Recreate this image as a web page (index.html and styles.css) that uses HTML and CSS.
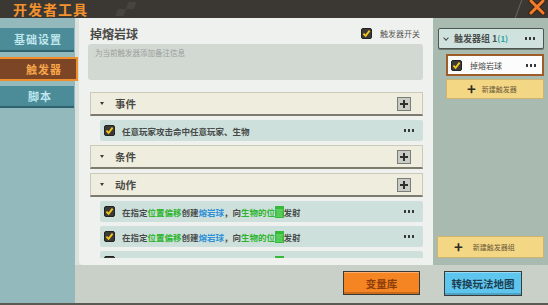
FILE: index.html
```html
<!DOCTYPE html>
<html lang="zh">
<head>
    <meta charset="UTF-8">
    <title>开发者工具</title>
    <link rel="stylesheet" href="styles.css">
</head>
<body>
<div class="app">
    <div class="topbar">
        <span class="title">开发者工具</span>
        <span class="tiles"></span>
        <span class="slash"></span>
        <svg class="close" width="18" height="15" viewBox="0 0 18 15">
            <path d="M3 1 L15 13 M15 1 L3 13" stroke="#3a2410" stroke-width="5" stroke-linecap="round"/>
            <path d="M3 1 L15 13 M15 1 L3 13" stroke="#f57a2a" stroke-width="3" stroke-linecap="round"/>
        </svg>
    </div>
    <div class="main">
        <div class="sidebar">
            <div class="tab">基础设置</div>
            <div class="tab active">触发器</div>
            <div class="tab">脚本</div>
        </div>
        <div class="work">
            <div class="upper">
                <div class="editor">
                    <div class="panel">
                        <div class="head">
                            <span class="name">掉熔岩球</span>
                            <span class="switch">
                                <svg class="check" width="11" height="11" viewBox="0 0 11 11"><rect x="0.5" y="0.5" width="10" height="10" rx="1.5" fill="#3c3a36" stroke="#222"/><path d="M2.4 5.6 L4.6 7.8 L8.6 2.6" fill="none" stroke="#f4c81c" stroke-width="1.8"/></svg>
                                触发器开关
                            </span>
                        </div>
                        <div class="note">为当前触发器添加备注信息</div>
                        <div class="list">
                            <div class="section"><i class="tri"></i><span>事件</span><b class="plus"></b></div>
                            <div class="item">
                                <svg class="check" width="11" height="11" viewBox="0 0 11 11"><rect x="0.5" y="0.5" width="10" height="10" rx="1.5" fill="#3c3a36" stroke="#222"/><path d="M2.4 5.6 L4.6 7.8 L8.6 2.6" fill="none" stroke="#f4c81c" stroke-width="1.8"/></svg>
                                <span class="txt">任意玩家攻击命中任意玩家、生物</span>
                                <span class="more"></span>
                            </div>
                            <div class="section"><i class="tri"></i><span>条件</span><b class="plus"></b></div>
                            <div class="section"><i class="tri"></i><span>动作</span><b class="plus"></b></div>
                            <div class="item">
                                <svg class="check" width="11" height="11" viewBox="0 0 11 11"><rect x="0.5" y="0.5" width="10" height="10" rx="1.5" fill="#3c3a36" stroke="#222"/><path d="M2.4 5.6 L4.6 7.8 L8.6 2.6" fill="none" stroke="#f4c81c" stroke-width="1.8"/></svg>
                                <span class="txt">在指定<em class="g">位置偏移</em>创建<em class="b">熔岩球</em>，向<em class="g">生物的位</em><em class="gbox">置</em>发射</span>
                                <span class="more"></span>
                            </div>
                            <div class="item">
                                <svg class="check" width="11" height="11" viewBox="0 0 11 11"><rect x="0.5" y="0.5" width="10" height="10" rx="1.5" fill="#3c3a36" stroke="#222"/><path d="M2.4 5.6 L4.6 7.8 L8.6 2.6" fill="none" stroke="#f4c81c" stroke-width="1.8"/></svg>
                                <span class="txt">在指定<em class="g">位置偏移</em>创建<em class="b">熔岩球</em>，向<em class="g">生物的位</em><em class="gbox">置</em>发射</span>
                                <span class="more"></span>
                            </div>
                            <div class="item">
                                <svg class="check" width="11" height="11" viewBox="0 0 11 11"><rect x="0.5" y="0.5" width="10" height="10" rx="1.5" fill="#3c3a36" stroke="#222"/><path d="M2.4 5.6 L4.6 7.8 L8.6 2.6" fill="none" stroke="#f4c81c" stroke-width="1.8"/></svg>
                                <span class="txt">在指定<em class="g">位置偏移</em>创建<em class="b">熔岩球</em>，向<em class="g">生物的位</em><em class="gbox">置</em>发射</span>
                                <span class="more"></span>
                            </div>
                        </div>
                    </div>
                </div>
                <div class="groups">
                    <div class="group">
                        <span class="chev"></span>
                        <span class="gname">触发器组 1<em>(1)</em></span>
                        <span class="more"></span>
                    </div>
                    <div class="trigger">
                        <svg class="check" width="11" height="11" viewBox="0 0 11 11"><rect x="0.5" y="0.5" width="10" height="10" rx="1.5" fill="#3c3a36" stroke="#222"/><path d="M2.4 5.6 L4.6 7.8 L8.6 2.6" fill="none" stroke="#f4c81c" stroke-width="1.8"/></svg>
                        <span class="tname">掉熔岩球</span>
                        <span class="more"></span>
                    </div>
                    <div class="add small"><span class="cross">+</span>新建触发器</div>
                    <div class="spacer"></div>
                    <div class="add wide"><span class="cross">+</span>新建触发器组</div>
                </div>
            </div>
            <div class="bottom">
                <div class="btn orange">变量库</div>
                <div class="btn blue">转换玩法地图</div>
            </div>
        </div>
    </div>
</div>
</body>
</html>
```

FILE: styles.css
```css
* {
    box-sizing: border-box;
}
body {
    margin: 0;
    font-family: "Noto Sans CJK SC", "Noto Sans", sans-serif;
    background: #3a3733;
}
.app {
    width: 548px;
    height: 305px;
    overflow: hidden;
    display: flex;
    flex-direction: column;
    border-bottom: 2px solid #5b5a52;
}
.topbar {
    height: 18px;
    flex: none;
    display: flex;
    align-items: center;
    background: #3b3834;
}
.title {
    margin-left: 13px;
    font-size: 14px;
    font-weight: bold;
    color: #f3922c;
    line-height: 18px;
    letter-spacing: 1px;
}
.tiles {
    margin-left: 30px;
    width: 16px;
    height: 14px;
    background:
        linear-gradient(#47443f, #47443f) 8px 0 / 8px 7px no-repeat,
        linear-gradient(#47443f, #47443f) 0 7px / 8px 7px no-repeat;
    transform: skewX(-20deg);
}
.slash {
    margin-left: auto;
    width: 1px;
    height: 18px;
    background: #6a6660;
    transform: skewX(-20deg);
    margin-right: 9px;
}
.close {
    margin-right: 2px;
    margin-top: -3px;
}
.main {
    flex: 1;
    display: flex;
    min-height: 0;
}
.sidebar {
    width: 75px;
    flex: none;
    background: #93b9bc;
    padding-top: 10px;
    display: flex;
    flex-direction: column;
    gap: 5px;
}
.tab {
    width: 74px;
    height: 24px;
    background: #4c8c98;
    border-bottom: 2px solid #2d6470;
    color: #bfe7ee;
    font-size: 11px;
    font-weight: bold;
    text-align: right;
    padding-right: 12px;
    line-height: 22px;
    letter-spacing: 1px;
}
.tab.active {
    width: 78px;
    background: #7b4526;
    border: 2px solid #f0902c;
    border-left: none;
    color: #f7a64a;
    padding-right: 14px;
    line-height: 20px;
    position: relative;
    z-index: 1;
}
.tab:last-child {
    height: 22px;
    padding-right: 22px;
    line-height: 20px;
}
.work {
    flex: 1;
    display: flex;
    flex-direction: column;
    background: #c9d0c8;
}
.upper {
    height: 247px;
    display: flex;
}
.editor {
    flex: 1;
    background: #dbe1dd;
    padding-left: 4px;
    display: flex;
}
.panel {
    flex: 1;
    background: #eff1ef;
    border-bottom-left-radius: 4px;
    padding: 5px 10px 6px 9px;
    display: flex;
    flex-direction: column;
}
.head {
    display: flex;
    align-items: center;
    height: 20px;
    padding-left: 2px;
}
.name {
    font-size: 12px;
    font-weight: bold;
    color: #4a4a48;
}
.switch {
    margin-left: auto;
    margin-right: 3px;
    display: flex;
    align-items: center;
    gap: 8px;
    font-size: 8px;
    color: #55554f;
}
.note {
    margin-top: 1px;
    height: 36px;
    background: #d2d8d2;
    border-radius: 3px;
    font-size: 7.5px;
    color: #9aa09a;
    padding: 3px 7px;
}
.list {
    margin-top: 12px;
    padding-left: 2px;
    height: 166px;
    overflow: hidden;
    display: flex;
    flex-direction: column;
    gap: 4px;
}
.section {
    flex: none;
    height: 24px;
    background: #eeedde;
    border: 1px solid #cbc9b8;
    border-bottom: 2px solid #7d7b70;
    display: flex;
    align-items: center;
    padding-left: 9px;
    font-size: 10.5px;
    font-weight: bold;
    color: #4a4a46;
}
.tri {
    width: 0;
    height: 0;
    border-left: 2.5px solid transparent;
    border-right: 2.5px solid transparent;
    border-top: 3px solid #3c3c3a;
    margin-right: 11px;
}
.plus {
    margin-left: auto;
    margin-right: 11px;
    width: 14px;
    height: 14px;
    background: #c9ccc6;
    border: 1px solid #7a7c78;
    position: relative;
}
.plus::before,
.plus::after {
    content: "";
    position: absolute;
    background: #2e302e;
}
.plus::before {
    left: 2px;
    top: 5px;
    width: 8px;
    height: 2px;
}
.plus::after {
    left: 5px;
    top: 2px;
    width: 2px;
    height: 8px;
}
.item {
    flex: none;
    margin-left: 10px;
    height: 21px;
    background: #cde0dc;
    border-radius: 2px;
    display: flex;
    align-items: center;
    padding-left: 4px;
    font-size: 8.5px;
    font-weight: bold;
    color: #474a48;
}
.item .check {
    margin-right: 7px;
}
.txt em {
    font-style: normal;
}
.g {
    color: #2fb52c;
}
.b {
    color: #2f8fd8;
}
.gbox {
    background: #38b83a;
    color: #60d060;
}
.more {
    margin-left: auto;
    margin-right: 8px;
    width: 12px;
    height: 3px;
    background: radial-gradient(circle, #333 1.1px, transparent 1.5px) 0 0 / 4px 3px repeat-x;
}
.groups {
    width: 115px;
    flex: none;
    background: #a9bbb0;
    padding: 10px 4px 7px 4px;
    display: flex;
    flex-direction: column;
}
.group {
    height: 21px;
    margin-left: 1px;
    background: #d0e2de;
    border: 1px solid #4e5650;
    border-radius: 2px;
    box-shadow: 0 1px 0 #6d7a70;
    display: flex;
    align-items: center;
    padding-left: 5px;
    font-size: 9px;
    font-weight: bold;
    color: #4a4e4c;
}
.chev {
    width: 4px;
    height: 4px;
    border-right: 1.3px solid #444;
    border-bottom: 1.3px solid #444;
    transform: rotate(45deg);
    margin: -2px 6px 0 0;
}
.gname em {
    font-style: normal;
    color: #2aa3a0;
    font-size: 8px;
}
.group .more {
    margin-right: 7px;
}
.trigger {
    margin: 5px 0 0 9px;
    height: 22px;
    background: #fcfcfc;
    border: 2px solid #9e5c28;
    display: flex;
    align-items: center;
    padding-left: 3px;
    font-size: 8px;
    color: #4a4a48;
}
.trigger .check {
    margin-right: 8px;
}
.trigger .more {
    margin-right: 5px;
}
.add {
    height: 20px;
    background: #f4d784;
    border: 1px solid #cdb470;
    display: flex;
    align-items: center;
    font-size: 7px;
    color: #6a5a3a;
}
.add.small {
    margin: 3px 0 0 9px;
    padding-left: 20px;
}
.add.wide {
    height: 22px;
    padding-left: 16px;
}
.cross {
    font-size: 15px;
    font-weight: bold;
    color: #2d2a22;
    margin-right: 6px;
    line-height: 12px;
}
.add.wide .cross {
    margin-right: 10px;
}
.spacer {
    flex: 1;
}
.bottom {
    flex: 1;
    display: flex;
    align-items: center;
    padding-left: 268px;
    gap: 24px;
    padding-bottom: 2px;
}
.btn {
    height: 24px;
    border: 1px solid #3a3a38;
    display: flex;
    align-items: center;
    justify-content: center;
    font-size: 10.5px;
    font-weight: bold;
    box-shadow: inset 0 -2px 0 rgba(0, 0, 0, 0.18), inset 0 1px 0 rgba(255, 255, 255, 0.35);
}
.orange {
    width: 77px;
    background: #f58422;
    color: #8e3e0c;
}
.blue {
    width: 78px;
    height: 25px;
    background: #5ec6ee;
    color: #1d3f52;
}
```
